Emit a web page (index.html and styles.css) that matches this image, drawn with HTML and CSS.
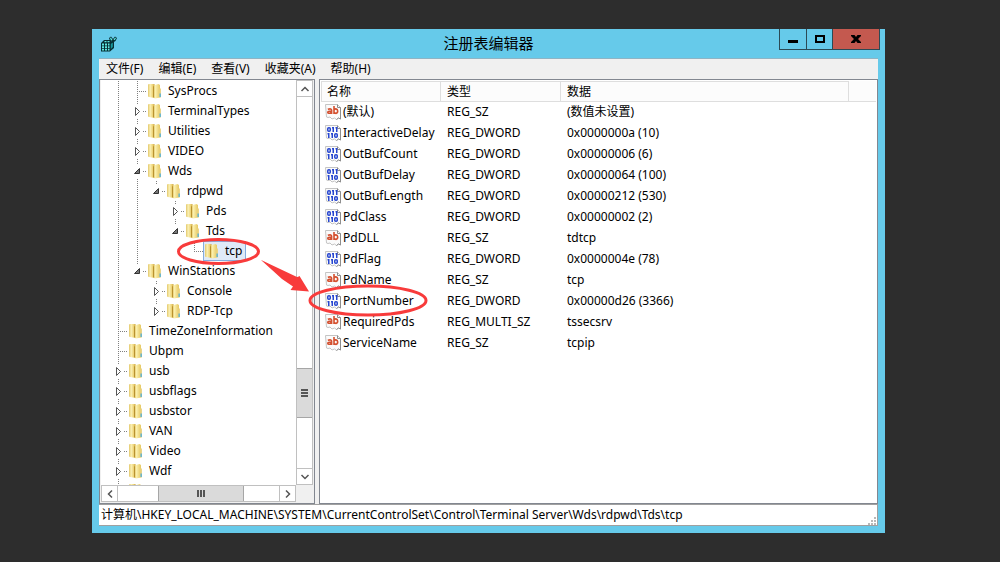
FILE: index.html
```html
<!DOCTYPE html>
<html lang="zh-CN">
<head>
<meta charset="utf-8">
<title>注册表编辑器</title>
<link rel="stylesheet" href="styles.css">
</head>
<body>
<svg class="defs" aria-hidden="true">
  <defs>
    <linearGradient id="gold-back" x1="0" x2="1" y1="0" y2="0">
      <stop offset="0" stop-color="#e3c86c"/><stop offset=".35" stop-color="#faf0b4"/><stop offset=".75" stop-color="#ecd173"/><stop offset="1" stop-color="#c9a23c"/>
    </linearGradient>
    <linearGradient id="gold-front" x1="0" x2="1" y1="0" y2="0">
      <stop offset="0" stop-color="#d9b650"/><stop offset=".35" stop-color="#fbf0ae"/><stop offset="1" stop-color="#e6c862"/>
    </linearGradient>
    <symbol id="folder" viewBox="0 0 16 16">
      <path d="M1 1.500 2 1h5.500v14L2 14 1 13.500z" fill="url(#gold-back)"/>
      <path d="M6 2.500 11.500 1l1.500 1v12.500l-5 1L6 14z" fill="url(#gold-front)"/>
      <path d="M6 2.500 7 3.500V14.500L6 14z" fill="#b9922f"/>
      <path d="M12.500 5.500H14V14.500h-1.500z" fill="#ead489"/>
      <path d="M12.500 10.500h1.300v3.500h-1.300z" fill="#4fb0dc"/>
    </symbol>
    <symbol id="closed" viewBox="0 0 9 11"><path d="M2.500 1.500v8l4-4z" fill="#fff" stroke="#555"/></symbol>
    <symbol id="open" viewBox="0 0 9 11"><path d="M6.500 2.500v5h-5z" fill="#777" stroke="#333"/></symbol>
    <symbol id="page" viewBox="0 0 16 16">
      <path d="M.5.500h12l3 3v11.500l-2-1-2 1.500-2-1.500-2.500 1-2-2-2 .5-1.500-.5z" fill="#fbfbfb" stroke="#c4c4c4"/>
      <path d="M12.500.500v3h3v11.500l-2-1-2 1.500" fill="none" stroke="#8e8e8e"/>
    </symbol>
    <symbol id="sz" viewBox="0 0 16 16">
      <use href="#page"/>
      <g fill="none" stroke="#d4502f" stroke-width="1.600"><path d="M2.800 5.300q3.800-1.300 3.800 1V10M6.500 7.200H4.300q-1.600.1-1.500 1.200.1 1 1.400.9 1.500 0 2.300-1.500"/><path d="M9 2v8M9 6q.8-1.200 2-1.100 1.700.2 1.700 2.200 0 2.200-1.700 2.300-1.200 0-2-1.100"/></g>
    </symbol>
    <symbol id="dword" viewBox="0 0 16 16">
      <use href="#page"/>
      <g fill="none" stroke="#2746d0" stroke-width="1.500"><rect x="2.750" y="2.750" width="2.500" height="3.500" rx="1"/><path d="M7 2.750h1.250V7M10.500 2.750h1.250V7M2.500 8.750h1.250V13M6 8.750h1.250V13"/><rect x="9.750" y="8.750" width="2.500" height="3.500" rx="1"/></g>
    </symbol>
  </defs>
</svg>

<main class="window">
  <header class="titlebar">
    <svg class="app-icon" viewBox="0 0 16 16" aria-hidden="true">
      <path d="M0 7 3 4h6l2 2 2-1v7l-4 3.500H0z" fill="#072e33"/>
      <path d="M1 7.500h2v2H1zM4 7.500h2v2H4zM7 7.500h1.500v2H7zM1 10.300h2v2H1zM4 10.300h2v2H4zM7 10.300h1.500v2H7zM1 13h2v1.500H1zM4 13h2v1.500H4zM7 13h1.500v1.500H7zM3.500 5h2v1.200h-2zM6.500 5h2v1.200h-2z" fill="#5fe8e2"/>
      <path d="M9.800 8l2-1.500V11l-2 2z" fill="#17979b"/>
      <path d="M8 2l2-1.500L12 3l2-2.500L16 2l-1.500 3L12 6.500 9 5z" fill="#072e33"/>
      <path d="M9 2l1-.5L11.500 4 10 4.500zM12.500 3.500l1.700-2 .8.800-1.300 2z" fill="#5fe8e2"/>
    </svg>
    <h1 class="title">注册表编辑器</h1>
    <div class="controls">
      <button class="control" aria-label="最小化"><svg viewBox="0 0 12 12"><path d="M1 7h10v3H1z"/></svg></button>
      <button class="control" aria-label="最大化"><svg viewBox="0 0 12 12"><path d="M1 2h10v8H1zM3 4v4h6V4z" fill-rule="evenodd"/></svg></button>
      <button class="control close" aria-label="关闭"><svg viewBox="0 0 12 12"><path d="M1 2h3.500L6 4l1.500-2H11v1L8 6l3 3v1H7.500L6 8l-1.500 2H1V9l3-3-3-3z"/></svg></button>
    </div>
  </header>

  <div class="client">
    <nav class="menu">
      <button>文件(F)</button><button>编辑(E)</button><button>查看(V)</button><button>收藏夹(A)</button><button>帮助(H)</button>
    </nav>

    <div class="panes">
      <section class="tree-pane">
        <ul class="tree">
          <li><i class="line"></i><i class="tee"></i><svg class="icon"><use href="#folder"/></svg><span>SysProcs</span></li>
          <li><i class="line"></i><i class="tee"><button aria-label="展开"><svg><use href="#closed"/></svg></button></i><svg class="icon"><use href="#folder"/></svg><span>TerminalTypes</span></li>
          <li><i class="line"></i><i class="tee"><button aria-label="展开"><svg><use href="#closed"/></svg></button></i><svg class="icon"><use href="#folder"/></svg><span>Utilities</span></li>
          <li><i class="line"></i><i class="tee"><button aria-label="展开"><svg><use href="#closed"/></svg></button></i><svg class="icon"><use href="#folder"/></svg><span>VIDEO</span></li>
          <li><i class="line"></i><i class="tee"><button aria-label="折叠"><svg><use href="#open"/></svg></button></i><svg class="icon"><use href="#folder"/></svg><span>Wds</span></li>
          <li><i class="line"></i><i class="line"></i><i class="end"><button aria-label="折叠"><svg><use href="#open"/></svg></button></i><svg class="icon"><use href="#folder"/></svg><span>rdpwd</span></li>
          <li><i class="line"></i><i class="line"></i><i></i><i class="tee"><button aria-label="展开"><svg><use href="#closed"/></svg></button></i><svg class="icon"><use href="#folder"/></svg><span>Pds</span></li>
          <li><i class="line"></i><i class="line"></i><i></i><i class="end"><button aria-label="折叠"><svg><use href="#open"/></svg></button></i><svg class="icon"><use href="#folder"/></svg><span>Tds</span></li>
          <li><i class="line"></i><i class="line"></i><i></i><i></i><i class="end"></i><span class="selected"><svg class="icon"><use href="#folder"/></svg><span>tcp</span></span></li>
          <li><i class="line"></i><i class="end"><button aria-label="折叠"><svg><use href="#open"/></svg></button></i><svg class="icon"><use href="#folder"/></svg><span>WinStations</span></li>
          <li><i class="line"></i><i></i><i class="tee"><button aria-label="展开"><svg><use href="#closed"/></svg></button></i><svg class="icon"><use href="#folder"/></svg><span>Console</span></li>
          <li><i class="line"></i><i></i><i class="end"><button aria-label="展开"><svg><use href="#closed"/></svg></button></i><svg class="icon"><use href="#folder"/></svg><span>RDP-Tcp</span></li>
          <li><i class="tee"></i><svg class="icon"><use href="#folder"/></svg><span>TimeZoneInformation</span></li>
          <li><i class="tee"></i><svg class="icon"><use href="#folder"/></svg><span>Ubpm</span></li>
          <li><i class="tee"><button aria-label="展开"><svg><use href="#closed"/></svg></button></i><svg class="icon"><use href="#folder"/></svg><span>usb</span></li>
          <li><i class="tee"><button aria-label="展开"><svg><use href="#closed"/></svg></button></i><svg class="icon"><use href="#folder"/></svg><span>usbflags</span></li>
          <li><i class="tee"><button aria-label="展开"><svg><use href="#closed"/></svg></button></i><svg class="icon"><use href="#folder"/></svg><span>usbstor</span></li>
          <li><i class="tee"><button aria-label="展开"><svg><use href="#closed"/></svg></button></i><svg class="icon"><use href="#folder"/></svg><span>VAN</span></li>
          <li><i class="tee"><button aria-label="展开"><svg><use href="#closed"/></svg></button></i><svg class="icon"><use href="#folder"/></svg><span>Video</span></li>
          <li><i class="tee"><button aria-label="展开"><svg><use href="#closed"/></svg></button></i><svg class="icon"><use href="#folder"/></svg><span>Wdf</span></li>
          <li><i class="line"></i><svg class="icon"><use href="#folder"/></svg></li>
        </ul>
        <div class="vscroll">
          <button class="arrow" aria-label="向上"><svg viewBox="0 0 10 10"><path d="M1.500 7 5 3.500 8.500 7"/></svg></button>
          <div class="track-before"></div>
          <div class="thumb"><svg viewBox="0 0 10 10"><path d="M1 2h7M1 5h7M1 8h7"/></svg></div>
          <div class="track-after"></div>
          <button class="arrow" aria-label="向下"><svg viewBox="0 0 10 10"><path d="M1.500 3 5 6.500 8.500 3"/></svg></button>
        </div>
        <div class="hscroll">
          <button class="arrow" aria-label="向左"><svg viewBox="0 0 10 10"><path d="M7 1.500 3.500 5 7 8.500"/></svg></button>
          <div class="track-before"></div>
          <div class="thumb"><svg viewBox="0 0 10 10"><path d="M2 1v7M5 1v7M8 1v7"/></svg></div>
          <div class="track-after"></div>
          <button class="arrow" aria-label="向右"><svg viewBox="0 0 10 10"><path d="M3 1.500 6.500 5 3 8.500"/></svg></button>
        </div>
      </section>

      <section class="list-pane">
        <table>
          <colgroup><col class="col-name"><col class="col-type"><col class="col-data"><col></colgroup>
          <thead><tr><th>名称</th><th>类型</th><th>数据</th><td></td></tr></thead>
          <tbody>
            <tr><td><div class="name"><svg class="icon"><use href="#sz"/></svg>(默认)</div></td><td>REG_SZ</td><td>(数值未设置)</td></tr>
            <tr><td><div class="name"><svg class="icon"><use href="#dword"/></svg>InteractiveDelay</div></td><td>REG_DWORD</td><td>0x0000000a (10)</td></tr>
            <tr><td><div class="name"><svg class="icon"><use href="#dword"/></svg>OutBufCount</div></td><td>REG_DWORD</td><td>0x00000006 (6)</td></tr>
            <tr><td><div class="name"><svg class="icon"><use href="#dword"/></svg>OutBufDelay</div></td><td>REG_DWORD</td><td>0x00000064 (100)</td></tr>
            <tr><td><div class="name"><svg class="icon"><use href="#dword"/></svg>OutBufLength</div></td><td>REG_DWORD</td><td>0x00000212 (530)</td></tr>
            <tr><td><div class="name"><svg class="icon"><use href="#dword"/></svg>PdClass</div></td><td>REG_DWORD</td><td>0x00000002 (2)</td></tr>
            <tr><td><div class="name"><svg class="icon"><use href="#sz"/></svg>PdDLL</div></td><td>REG_SZ</td><td>tdtcp</td></tr>
            <tr><td><div class="name"><svg class="icon"><use href="#dword"/></svg>PdFlag</div></td><td>REG_DWORD</td><td>0x0000004e (78)</td></tr>
            <tr><td><div class="name"><svg class="icon"><use href="#sz"/></svg>PdName</div></td><td>REG_SZ</td><td>tcp</td></tr>
            <tr><td><div class="name"><svg class="icon"><use href="#dword"/></svg>PortNumber</div></td><td>REG_DWORD</td><td>0x00000d26 (3366)</td></tr>
            <tr><td><div class="name"><svg class="icon"><use href="#sz"/></svg>RequiredPds</div></td><td>REG_MULTI_SZ</td><td>tssecsrv</td></tr>
            <tr><td><div class="name"><svg class="icon"><use href="#sz"/></svg>ServiceName</div></td><td>REG_SZ</td><td>tcpip</td></tr>
          </tbody>
        </table>
      </section>
    </div>

    <footer class="status">
      <span>计算机\HKEY_LOCAL_MACHINE\SYSTEM\CurrentControlSet\Control\Terminal Server\Wds\rdpwd\Tds\tcp</span>
      <svg class="grip" viewBox="0 0 9 9" aria-hidden="true"><path d="M7 1h2v2H7zM4 4h2v2H4zM7 4h2v2H7zM1 7h2v2H1zM4 7h2v2H4zM7 7h2v2H7z"/></svg>
    </footer>
  </div>

  <svg class="marks" viewBox="0 0 360 300" aria-hidden="true">
    <ellipse cx="126.500" cy="222.500" rx="40" ry="12"/>
    <ellipse cx="276" cy="271.500" rx="58" ry="14.500"/>
    <path d="M169 231 204 250 207.500 247 217 262.500 198.500 261 201 257.500 190 250z"/>
    <path d="M169 231 205 248 207.500 247.500 205 255z"/>
  </svg>
</main>
</body>
</html>
```

FILE: styles.css
```css
* { box-sizing: border-box; }
body {
  margin: 0;
  height: 100vh;
  padding: 29px 115px 29px 92px;
  display: flex;
  background: #2d2d2d;
  color: #000;
  font: 12px/20px "Noto Sans", "Noto Sans CJK SC", sans-serif;
}
button { margin: 0; padding: 0; border: 0; background: none; font: inherit; color: inherit; }
svg { display: block; flex: none; }
.defs { position: absolute; width: 0; height: 0; }

.window {
  position: relative;
  flex: 1;
  min-width: 0;
  display: flex;
  flex-direction: column;
  padding: 0 7px 7px;
  background: #66caea;
}
.titlebar { display: grid; grid-template-columns: 1fr auto 1fr; height: 29px; }
.app-icon { width: 16px; height: 16px; margin: 7px 2px; }
.title { margin: 4px 0 0; font-size: 15px; line-height: 20px; font-weight: 400; }
.controls { justify-self: end; display: flex; height: 21px; margin-right: -2px; border: 1px solid #2b4a55; border-top: 0; }
.control { width: 26px; display: grid; place-items: center; }
.control + .control { border-left: 1px solid #2b4a55; }
.control svg { width: 12px; height: 12px; }
.control.close { width: 47px; background: #c4594f; }

.client { flex: 1; min-height: 0; display: flex; flex-direction: column; border-top: 1px solid #8fb4c4; background: #f0f0f0; }
.menu { display: flex; gap: 15px; height: 20px; padding-left: 7px; }

.panes { flex: 1; min-height: 0; display: flex; gap: 4px; }
.tree-pane {
  width: 216px;
  display: grid;
  grid-template: minmax(0, 1fr) 17px / minmax(0, 1fr) 17px;
  padding: 0 1px 1px;
  border: 1px solid #828790;
  background: #f0f0f0;
}
.tree { margin: 0; padding: 1px 0 0 8px; list-style: none; overflow: hidden; background: #fff; }
.tree li { display: flex; align-items: center; height: 20px; }
.tree i { width: 19px; height: 20px; flex: none; display: grid; place-items: center; }
.line, .tee, .end {
  --down: repeating-linear-gradient(#808080 0 1px, transparent 1px 2px);
  --across: repeating-linear-gradient(90deg, #808080 0 1px, transparent 1px 2px);
}
.line { background: var(--down) 9px 0 / 1px 20px no-repeat; }
.tee { background: var(--down) 9px 0 / 1px 20px no-repeat, var(--across) 9px 10px / 10px 1px no-repeat; }
.end { background: var(--down) 9px 0 / 1px 10px no-repeat, var(--across) 9px 10px / 10px 1px no-repeat; }
.tree button { width: 11px; height: 15px; display: grid; place-items: center; background: #fff; }
.tree button svg { width: 9px; height: 11px; }
.icon { width: 16px; height: 16px; }
.tree span { margin-left: 5px; }
.tree .selected { display: flex; align-items: center; height: 20px; margin-left: -1px; padding-right: 3px; border: 1px solid #84acdd; background: #dfeaf8; }

.vscroll, .hscroll { display: flex; background: #fff; }
.vscroll { flex-direction: column; border-left: 1px solid #c0c0c0; border-right: 1px solid #c0c0c0; }
.hscroll { border-top: 1px solid #c0c0c0; border-bottom: 1px solid #c0c0c0; }
.arrow { flex: 0 0 17px; display: grid; place-items: center; border: 0 solid #c0c0c0; }
.vscroll .arrow { border-width: 1px 0; }
.hscroll .arrow { border-width: 0 1px; }
.arrow svg, .thumb svg { width: 10px; height: 10px; fill: none; stroke: #555; stroke-width: 2; }
.arrow svg { stroke-width: 1.5; }
.thumb { display: grid; place-items: center; border: 0 solid #a6a6a6; background: #dadada; }
.vscroll .thumb { flex: 0 0 50px; border-width: 1px 0; }
.hscroll .thumb { flex: 0 0 86px; border-width: 0 1px; }
.vscroll .track-before { flex: 271; }
.vscroll .track-after { flex: 50; }
.hscroll .track-before { flex: 41; }
.hscroll .track-after { flex: 35; }

.list-pane { flex: 1; min-width: 0; padding: 1px 1px 0; border: 1px solid #828790; background: #fff; overflow: hidden; }
table { width: 100%; table-layout: fixed; border-collapse: separate; border-spacing: 0; }
.col-name, .col-type { width: 120px; }
.col-data { width: 288px; }
th, td { height: 21px; padding: 0 0 0 6px; font-weight: 400; text-align: left; white-space: nowrap; }
thead th, thead td { line-height: 19px; border-bottom: 1px solid #dedede; background: #fcfcfc; }
th { border-top: 1px solid #dedede; border-right: 1px solid #dedede; }
thead th:first-child { padding-left: 5px; border-left: 1px solid #dedede; }
tbody td { vertical-align: top; }
tbody td:first-child { padding-left: 4px; }
.name { display: flex; align-items: center; gap: 2px; }

.status {
  display: flex;
  justify-content: space-between;
  align-items: flex-end;
  height: 22px;
  padding: 0 1px 0 2px;
  border: solid #a0a0a0;
  border-width: 1px 1px 1px 0;
  background: #fff;
}
.grip { width: 9px; height: 9px; fill: #b8b8b8; }
.marks { position: absolute; left: 0; top: 0; width: 360px; height: 300px; fill: none; stroke: #f83b3b; stroke-width: 3; pointer-events: none; }
.marks path { fill: #f83b3b; stroke: none; }
```
